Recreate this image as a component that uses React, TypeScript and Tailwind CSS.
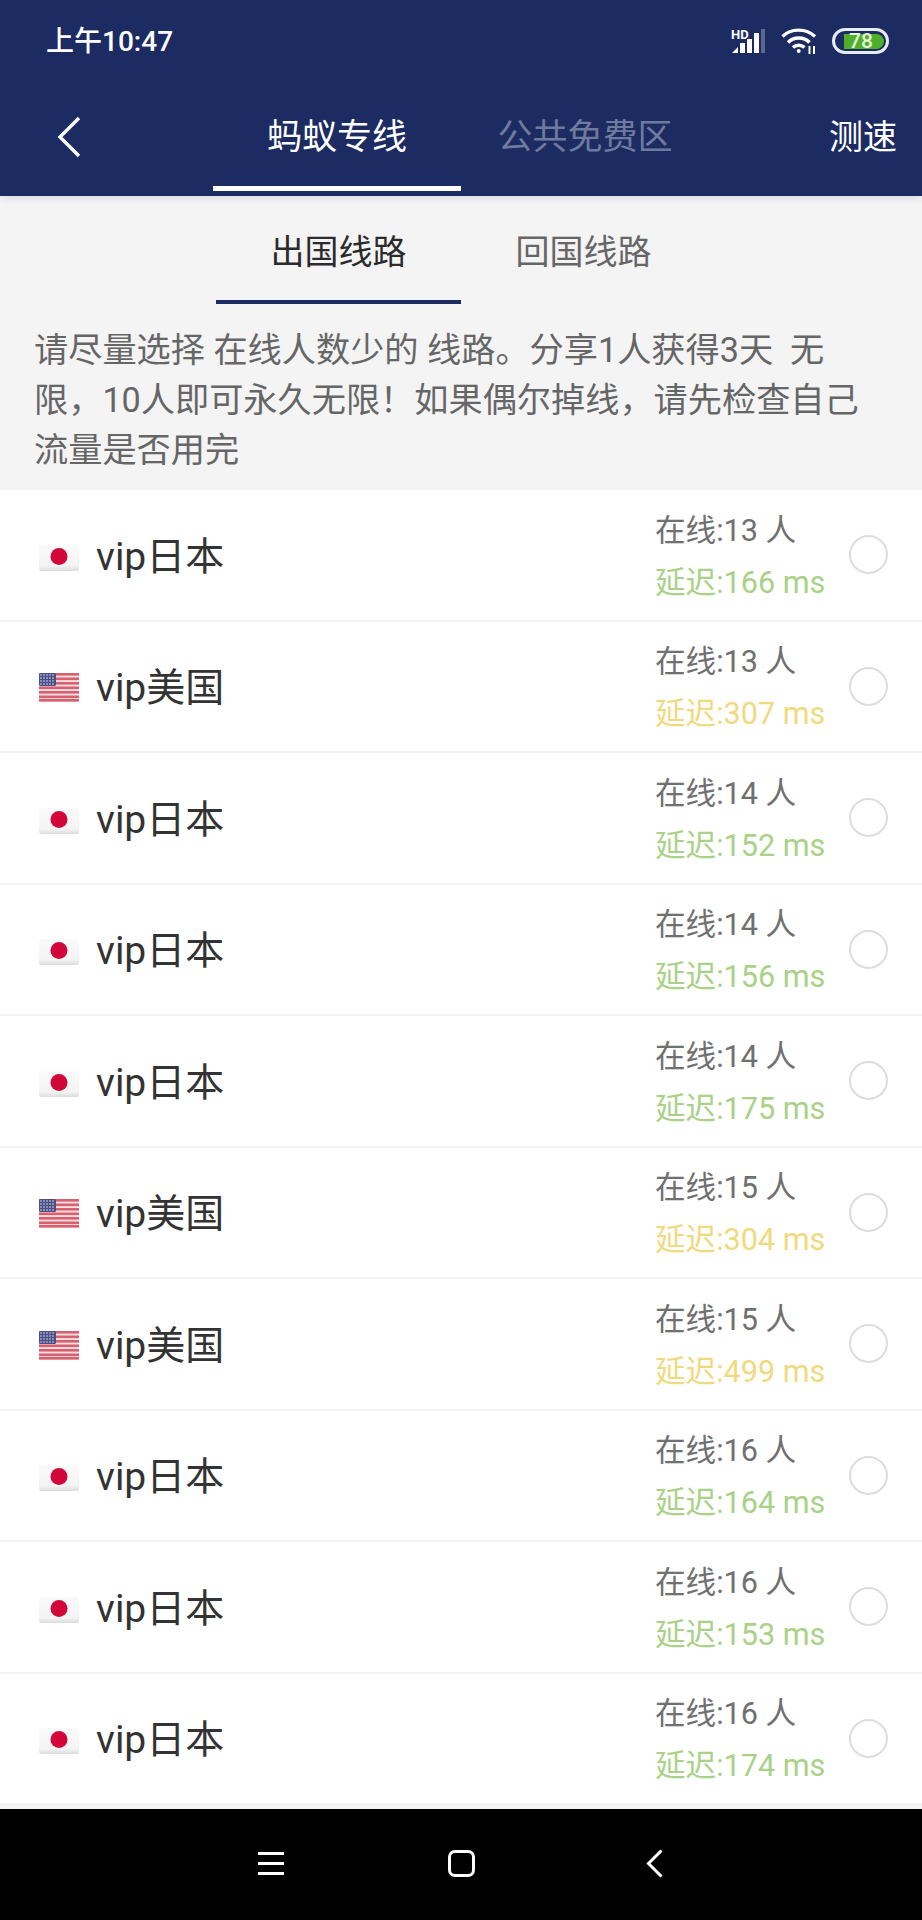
const lines = [
  { flag: "jp", name: "日本", online: 13, ms: 166 },
  { flag: "us", name: "美国", online: 13, ms: 307 },
  { flag: "jp", name: "日本", online: 14, ms: 152 },
  { flag: "jp", name: "日本", online: 14, ms: 156 },
  { flag: "jp", name: "日本", online: 14, ms: 175 },
  { flag: "us", name: "美国", online: 15, ms: 304 },
  { flag: "us", name: "美国", online: 15, ms: 499 },
  { flag: "jp", name: "日本", online: 16, ms: 164 },
  { flag: "jp", name: "日本", online: 16, ms: 153 },
  { flag: "jp", name: "日本", online: 16, ms: 174 },
];

function JapanFlag() {
  return (
    <svg className="mt-[6px]" width="40" height="26" viewBox="0 0 40 26">
      <defs>
        <linearGradient id="jp-bg" x1="0" y1="0" x2="0" y2="1">
          <stop offset="0" stopColor="#fafafa" />
          <stop offset="0.8" stopColor="#f4f4f4" />
          <stop offset="1" stopColor="#dcdcdc" />
        </linearGradient>
      </defs>
      <rect width="40" height="26" rx="2" fill="url(#jp-bg)" />
      <circle cx="20" cy="11.5" r="8.5" fill="#d3063a" />
    </svg>
  );
}

function UsFlag() {
  return (
    <svg className="mt-[3px]" width="40" height="29" viewBox="0 0 40 29">
      <rect width="40" height="29" rx="3" fill="#f7dfe2" />
      {[0, 4.5, 9, 13.5, 18, 22.5, 26].map((y) => (
        <rect key={y} y={y} width="40" height="2.6" fill="#d9606f" />
      ))}
      <rect width="17" height="13" rx="1.5" fill="#4a4f86" />
      {[2, 5, 8, 11].map((y) =>
        [2, 5, 8, 11, 14].map((x) => (
          <circle key={`${x}-${y}`} cx={x} cy={y} r="0.8" fill="#dfe0ee" />
        ))
      )}
    </svg>
  );
}

function StatusIcons() {
  return (
    <div className="flex items-center">
      {/* signal */}
      <svg width="36" height="26" viewBox="0 0 36 26">
        <text x="0" y="11" fill="#fff" fontSize="13" fontWeight="700" fontFamily="Roboto, sans-serif">
          HD
        </text>
        <path d="M1 25 L7 19 V25 Z" fill="#fff" />
        <rect x="9" y="15" width="5" height="10" fill="#fff" />
        <rect x="16" y="11" width="5" height="14" fill="#fff" />
        <rect x="23" y="5" width="5" height="20" fill="#fff" />
        <rect x="30" y="1" width="4" height="24" fill="#5c6890" />
      </svg>
      {/* wifi */}
      <svg className="ml-[14px]" width="37" height="28" viewBox="0 0 37 28" fill="none" stroke="#fff" strokeWidth="3.4">
        <path d="M1.5 9.5 C10 1 25 1 34 9.5" />
        <path d="M7 15.5 C12.5 9.5 23 9.5 28.5 15.5" />
        <path d="M12 20.5 C15 17.5 20.5 17.5 23.5 20.5" />
        <circle cx="17.7" cy="24" r="2" fill="#fff" stroke="none" />
        <path d="M28.5 19 V27 M33 19 V27" strokeWidth="2" />
      </svg>
      {/* battery */}
      <div className="ml-[14px] flex h-[26px] w-[57px] items-center rounded-full border-[3px] border-[#e8ebf2] pl-[9px] pr-[2px]">
        <div className="flex h-[15px] w-[40px] items-center justify-center rounded-r-full bg-[#4fae2a] pr-[6px] text-[21px] font-medium leading-none text-[#e6f5dc]">
          78
        </div>
      </div>
    </div>
  );
}

function LineRow({ flag, name, online, ms }: (typeof lines)[number]) {
  return (
    <div className="flex h-[131.5px] items-center border-b-2 border-[#f3f3f3] bg-white pl-[39px]">
      <div className="flex w-[40px] justify-center">{flag === "jp" ? <JapanFlag /> : <UsFlag />}</div>
      <div className="ml-[17px] pt-[5px] text-[39px] leading-none text-[#333333]">vip{name}</div>
      <div className="ml-auto w-[170px] pt-[4px]">
        <div className="text-[30.6px] leading-[52px] text-[#707070]">在线:{online} 人</div>
        <div className={`whitespace-nowrap text-[30.6px] leading-[52px] ${ms < 200 ? "text-[#a9d188]" : "text-[#f1d97e]"}`}>
          延迟:{ms} ms
        </div>
      </div>
      <div className="ml-[24px] mr-[34px] h-[39px] w-[39px] rounded-full border-2 border-[#dddddd]" />
    </div>
  );
}

export default function App() {
  return (
    <div className="flex h-[1920px] w-[922px] flex-col overflow-hidden bg-[#f4f4f5] font-['Roboto','Noto_Sans_CJK_SC',sans-serif]">
      {/* Header */}
      <div className="relative h-[196px] bg-[#1c2b61] text-white shadow-[0_2px_8px_rgba(28,43,97,0.12)]">
        <div className="flex h-[82px] items-center justify-between pl-[46px] pr-[33px]">
          <div className="pt-[2px] text-[28px] font-medium leading-none">上午10:47</div>
          <StatusIcons />
        </div>
        <div className="flex h-[114px] items-stretch">
          <div className="flex w-[213px] items-center pb-[4px] pl-[56px]">
            <svg width="26" height="42" viewBox="0 0 26 42" fill="none" stroke="#fff" strokeWidth="3.4">
              <path d="M23 2 L4 21 L23 40" />
            </svg>
          </div>
          <div className="flex h-[109px] w-[248px] items-center justify-center border-b-[5px] border-white pt-[9px] text-[35px]">
            蚂蚁专线
          </div>
          <div className="flex w-[248px] items-center justify-center pb-[2px] text-[35px] text-[#6f7b9e]">
            公共免费区
          </div>
          <div className="ml-auto flex items-center pb-[4px] pr-[25px] text-[34px]">测速</div>
        </div>
      </div>

      {/* Sub tabs */}
      <div className="flex h-[108px] pl-[216px]">
        <div className="flex w-[245px] items-center justify-center border-b-[4px] border-[#1c2b61] pt-[8px] text-[34px] text-[#2b2b2b]">
          出国线路
        </div>
        <div className="flex w-[245px] items-center justify-center border-b-[4px] border-transparent pt-[8px] text-[34px] text-[#666666]">
          回国线路
        </div>
      </div>

      {/* Notice */}
      <div className="h-[186px] whitespace-pre-wrap px-[34px] pt-[21px] text-[34.2px] leading-[50px] text-[#666666]">
        请尽量选择 在线人数少的 线路。分享1人获得3天  无
        <br />
        限，10人即可永久无限！如果偶尔掉线，请先检查自己
        <br />
        流量是否用完
      </div>

      {/* Lines */}
      <div className="mb-[4px]">
        {lines.map((line, index) => (
          <LineRow key={index} {...line} />
        ))}
      </div>

      {/* Android nav bar */}
      <div className="flex flex-1 items-center bg-black pb-[3px]">
        <div className="ml-[258px] flex w-[26px] flex-col gap-[7px]">
          <div className="h-[3px] bg-white" />
          <div className="h-[3px] bg-white" />
          <div className="h-[3px] bg-white" />
        </div>
        <div className="ml-[164px] h-[27px] w-[27px] rounded-[7px] border-[3px] border-white" />
        <svg className="ml-[171px]" width="17" height="29" viewBox="0 0 17 29" fill="none" stroke="#fff" strokeWidth="3">
          <path d="M15.5 1.5 L2.5 14.5 L15.5 27.5" />
        </svg>
      </div>
    </div>
  );
}
